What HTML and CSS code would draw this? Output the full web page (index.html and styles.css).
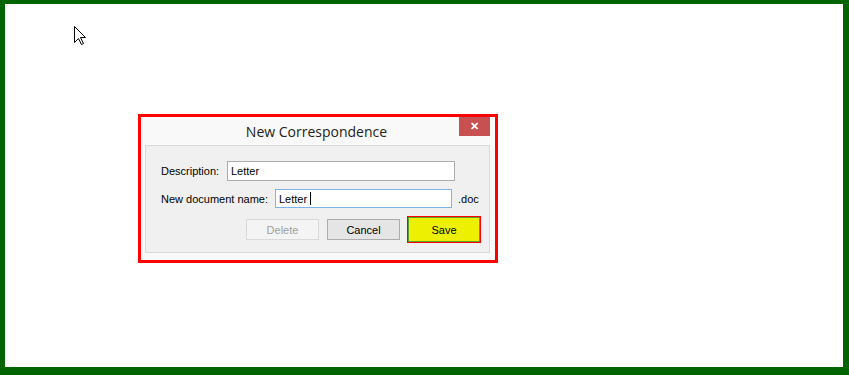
FILE: index.html
```html
<!DOCTYPE html>
<html lang="en">
<head>
  <meta charset="UTF-8">
  <title>New Correspondence</title>
  <link rel="stylesheet" href="styles.css">
</head>
<body>
  <div class="frame">
    <svg class="pointer" width="13" height="20" viewBox="0 0 13 20">
      <path d="M0.5 0.5 L0.5 16.5 L4.5 12.5 L7.5 18.5 L9.5 17.5 L6.5 11.5 L11.5 11.5 Z" fill="#fff" stroke="#000" stroke-width="1"/>
    </svg>

    <div class="dialog">
      <div class="titlebar">
        <span class="title">New Correspondence</span>
        <div class="close">&#x2715;</div>
      </div>

      <div class="panel">
        <div class="row">
          <label class="lbl lbl-desc">Description:</label>
          <div class="field field-desc">Letter</div>
        </div>
        <div class="row row-name">
          <label class="lbl lbl-name">New document name:</label>
          <div class="field field-name focused">Letter <span class="caret"></span></div>
          <span class="ext">.doc</span>
        </div>
        <div class="buttons">
          <button class="btn disabled">Delete</button>
          <button class="btn">Cancel</button>
          <button class="btn save">Save</button>
        </div>
      </div>
    </div>
  </div>
</body>
</html>
```

FILE: styles.css
```css
html, body {
  margin: 0;
  padding: 0;
  background: #006400;
}
body {
  font-family: 'Liberation Sans', Arial, sans-serif;
  font-size: 11px;
  color: #000;
}
.frame {
  position: relative;
  box-sizing: border-box;
  width: 849px;
  height: 375px;
  border-style: solid;
  border-color: #006400;
  border-width: 4px 6px 8px 5px;
  background: #fff;
  padding: 110px 0 0 133px;
}
.pointer {
  position: absolute;
  left: 69px;
  top: 22px;
}
.dialog {
  position: relative;
  width: 354px;
  border: 3px solid #ff0000;
  background: #f9f9f9;
  padding-bottom: 7px;
}
.titlebar {
  height: 28px;
  display: flex;
  align-items: center;
  justify-content: center;
}
.title {
  font-family: 'Open Sans', 'Noto Sans', sans-serif;
  font-size: 14px;
  color: #222;
  margin-left: -3px;
}
.close {
  position: absolute;
  top: 0;
  right: 5px;
  width: 31px;
  height: 19px;
  background: #c75050;
  color: #fff;
  font-size: 11px;
  font-weight: bold;
  display: flex;
  align-items: center;
  justify-content: center;
}
.panel {
  margin: 0 5px 0 4px;
  border: 1px solid #d9d9d9;
  background: #f0f0f0;
  padding: 15px 0 9px 15px;
}
.row {
  display: flex;
  align-items: center;
  height: 20px;
}
.row-name {
  margin-top: 8px;
  height: 19px;
}
.lbl-desc { width: 66px; }
.lbl-name { width: 114px; }
.field {
  box-sizing: border-box;
  height: 20px;
  border: 1px solid #acacac;
  background: #fff;
  padding: 0 3px;
  display: flex;
  align-items: center;
  white-space: pre;
}
.field-desc { width: 228px; }
.field-name {
  width: 177px;
  height: 19px;
}
.focused {
  border-color: #7eb4ea;
}
.caret {
  display: inline-block;
  width: 1px;
  height: 13px;
  background: #000;
}
.ext {
  margin-left: 6px;
}
.buttons {
  display: flex;
  align-items: center;
  justify-content: flex-end;
  gap: 8px;
  margin-top: 8px;
  padding-right: 8px;
}
.btn {
  box-sizing: border-box;
  width: 73px;
  height: 21px;
  font-family: 'Liberation Sans', Arial, sans-serif;
  font-size: 11px;
  border: 1px solid #acacac;
  background: #e5e5e5;
  color: #000;
  padding: 0;
}
.btn.disabled {
  border-color: #d9d9d9;
  background: #f4f4f4;
  color: #a0a0a0;
}
.btn.save {
  width: 74px;
  height: 27px;
  margin-left: -1px;
  border: 1px solid #ff0000;
  background: #edf000;
  box-shadow: inset 0 0 0 1px #5c9e2c;
}
```
